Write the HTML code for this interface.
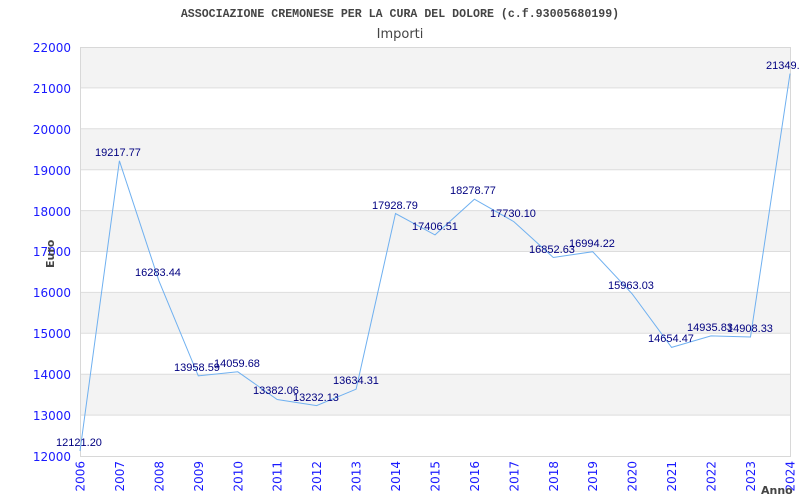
<!DOCTYPE html>
<html><head><meta charset="utf-8"><style>body{margin:0;background:#fff}svg{display:block}</style></head><body>
<svg width="800" height="500" xmlns="http://www.w3.org/2000/svg">
<rect width="800" height="500" fill="#fff"/>
<g fill="#f3f3f3">
<rect x="80" y="47" width="710" height="40.9"/>
<rect x="80" y="128.8" width="710" height="40.9"/>
<rect x="80" y="210.6" width="710" height="40.9"/>
<rect x="80" y="292.4" width="710" height="40.9"/>
<rect x="80" y="374.2" width="710" height="40.9"/>
</g>
<g stroke="#ddd" stroke-width="1">
<line x1="80" y1="87.9" x2="790" y2="87.9"/><line x1="80" y1="128.8" x2="790" y2="128.8"/>
<line x1="80" y1="169.7" x2="790" y2="169.7"/><line x1="80" y1="210.6" x2="790" y2="210.6"/>
<line x1="80" y1="251.5" x2="790" y2="251.5"/><line x1="80" y1="292.4" x2="790" y2="292.4"/>
<line x1="80" y1="333.3" x2="790" y2="333.3"/><line x1="80" y1="374.2" x2="790" y2="374.2"/>
<line x1="80" y1="415.1" x2="790" y2="415.1"/>
</g>
<rect x="80.5" y="47.5" width="710" height="409" fill="none" stroke="#d8d8d8"/>
<text x="400" y="17" text-anchor="middle" font-family="Liberation Mono, monospace" font-weight="bold" font-size="11.6" fill="#444">ASSOCIAZIONE CREMONESE PER LA CURA DEL DOLORE (c.f.93005680199)</text>
<text x="400" y="38" text-anchor="middle" font-family="DejaVu Sans, sans-serif" font-size="13" fill="#444">Importi</text>
<g font-family="DejaVu Sans, sans-serif" font-size="12" fill="#1a1aff" text-anchor="end">
<text x="71" y="52">22000</text><text x="71" y="93">21000</text><text x="71" y="134">20000</text>
<text x="71" y="175">19000</text><text x="71" y="216">18000</text><text x="71" y="256">17000</text>
<text x="71" y="297">16000</text><text x="71" y="338">15000</text><text x="71" y="379">14000</text>
<text x="71" y="420">13000</text><text x="71" y="461">12000</text>
</g>
<g font-family="DejaVu Sans, sans-serif" font-size="12" fill="#1a1aff" text-anchor="end">
<text transform="translate(84.5,461) rotate(-90)">2006</text>
<text transform="translate(123.9,461) rotate(-90)">2007</text>
<text transform="translate(163.4,461) rotate(-90)">2008</text>
<text transform="translate(202.8,461) rotate(-90)">2009</text>
<text transform="translate(242.3,461) rotate(-90)">2010</text>
<text transform="translate(281.7,461) rotate(-90)">2011</text>
<text transform="translate(321.1,461) rotate(-90)">2012</text>
<text transform="translate(360.6,461) rotate(-90)">2013</text>
<text transform="translate(400,461) rotate(-90)">2014</text>
<text transform="translate(439.5,461) rotate(-90)">2015</text>
<text transform="translate(478.9,461) rotate(-90)">2016</text>
<text transform="translate(518.3,461) rotate(-90)">2017</text>
<text transform="translate(557.8,461) rotate(-90)">2018</text>
<text transform="translate(597.2,461) rotate(-90)">2019</text>
<text transform="translate(636.7,461) rotate(-90)">2020</text>
<text transform="translate(676.1,461) rotate(-90)">2021</text>
<text transform="translate(715.5,461) rotate(-90)">2022</text>
<text transform="translate(755,461) rotate(-90)">2023</text>
<text transform="translate(794.4,461) rotate(-90)">2024</text>
</g>
<text transform="translate(54,268) rotate(-90)" font-family="DejaVu Sans, sans-serif" font-weight="bold" font-size="11" fill="#444">Euro</text>
<text x="761" y="494" font-family="DejaVu Sans, sans-serif" font-weight="bold" font-size="11" fill="#444">Anno</text>
<polyline fill="none" stroke="#6fb0f0" stroke-width="1" points="80,451 119.4,160.8 158.9,280.8 198.3,375.9 237.8,371.8 277.2,399.5 316.6,405.6 356.1,389.2 395.5,213.5 435,234.9 474.4,199.2 513.8,221.6 553.3,257.5 592.7,251.7 632.2,293.9 671.6,347.4 711,335.9 750.5,337 790,73.6"/>
<g font-family="Liberation Sans, Arial, sans-serif" font-size="11" fill="#000080" text-anchor="middle">
<text x="79" y="446">12121.20</text>
<text x="118" y="156">19217.77</text>
<text x="158" y="276">16283.44</text>
<text x="197" y="371">13958.59</text>
<text x="237" y="367">14059.68</text>
<text x="276" y="394">13382.06</text>
<text x="316" y="401">13232.13</text>
<text x="356" y="384">13634.31</text>
<text x="395" y="209">17928.79</text>
<text x="435" y="230">17406.51</text>
<text x="473" y="194">18278.77</text>
<text x="513" y="217">17730.10</text>
<text x="552" y="253">16852.63</text>
<text x="592" y="247">16994.22</text>
<text x="631" y="289">15963.03</text>
<text x="671" y="342">14654.47</text>
<text x="710" y="331">14935.83</text>
<text x="750" y="332">14908.33</text>
<text x="766" y="69" text-anchor="start">21349.</text>
</g>
</svg>
</body></html>
